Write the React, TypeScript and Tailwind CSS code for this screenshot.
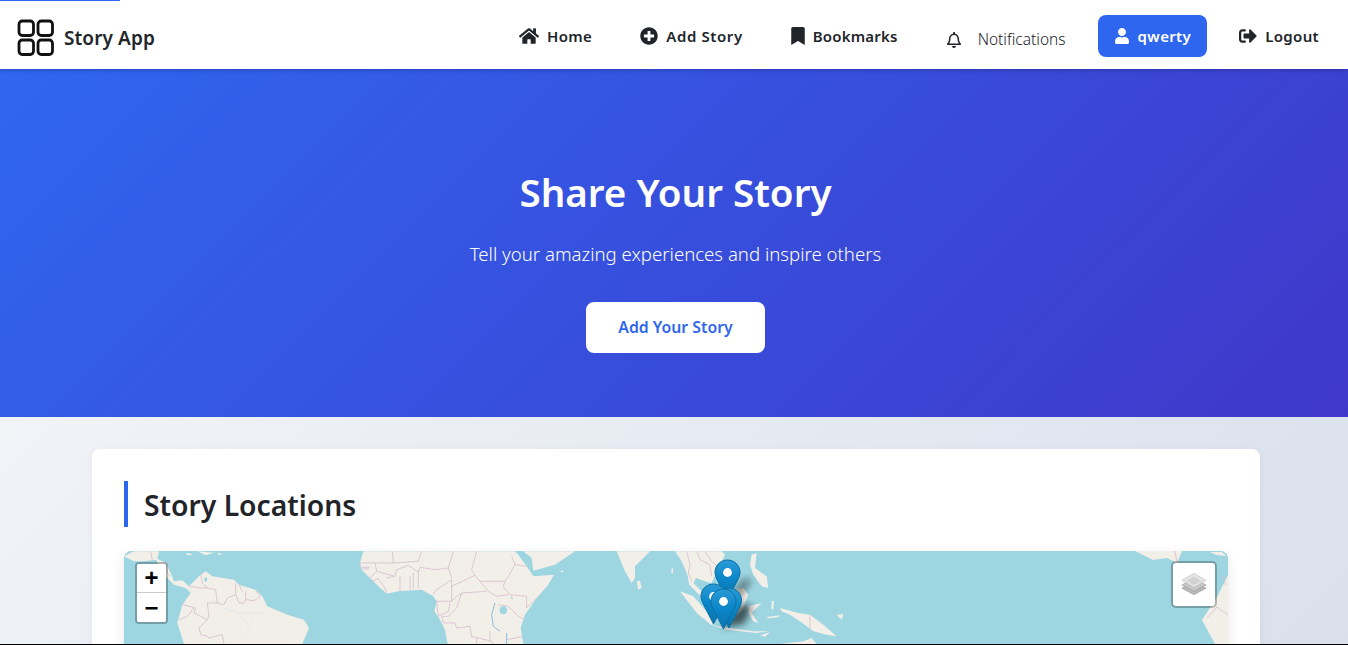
import { FaHome, FaPlusCircle, FaBookmark, FaRegBell, FaUser, FaSignOutAlt } from "react-icons/fa";
import type { ReactNode } from "react";

function NavLink({ icon, label, tracking }: { icon: ReactNode; label: string; tracking: string }) {
  return (
    <a className={`flex h-[42px] items-center gap-2 px-4 text-[15px] font-semibold text-[#212529] ${tracking}`}>
      {icon}
      <span>{label}</span>
    </a>
  );
}

function Logo() {
  return (
    <svg width="38" height="38" viewBox="0 0 38 38" fill="none" stroke="#111" strokeWidth="2.8">
      <rect x="2" y="2" width="14.5" height="14.5" rx="3.2" />
      <rect x="21" y="2" width="14.5" height="14.5" rx="3.2" />
      <rect x="2" y="21" width="14.5" height="14.5" rx="3.2" />
      <rect x="21" y="21" width="14.5" height="14.5" rx="3.2" />
    </svg>
  );
}

const PIN =
  "M0 0C-6.9 0 -12.5 5.4 -12.5 12.2C-12.5 15 -11.6 17.4 -10.2 20L0 40L10.2 20C11.6 17.4 12.5 15 12.5 12.2C12.5 5.4 6.9 0 0 0Z";

function Pin({ x, y }: { x: number; y: number }) {
  return (
    <g transform={`translate(${x} ${y})`}>
      <path d={PIN} fill="url(#pinFill)" stroke="#0b6fa3" strokeWidth="1" />
      <circle cx="0" cy="12.5" r="4.4" fill="#fff" />
    </g>
  );
}

// map art is traced in 3x crop coordinates, hence the scale on each group
function WorldMap() {
  return (
    <svg className="block h-[93px] w-[1104px]" viewBox="124 551 1104 93">
      <defs>
        <linearGradient id="pinFill" x1="0" y1="0" x2="0" y2="1">
          <stop offset="0" stopColor="#2a9bd6" />
          <stop offset="0.5" stopColor="#0a85c8" />
          <stop offset="1" stopColor="#0b74ad" />
        </linearGradient>
        <filter id="pinShadow" x="-60%" y="-60%" width="220%" height="220%">
          <feGaussianBlur stdDeviation="3.5" />
        </filter>
      </defs>
      <rect x="124" y="551" width="1104" height="93" fill="#9dd5e1" />

      {/* south america, left copy */}
      <g transform="translate(124 548) scale(0.3333)">
        <g fill="#f2efe9">
          <path d="M0 25L30 10L105 10L100 35L60 40L30 40Z" />
          <path d="M95 30L125 45L140 75L150 100L175 97L195 115L200 135L185 120L150 110L130 90L110 70Z" />
          <path d="M195 115L225 85L245 70L265 85L330 95L345 110L395 125L415 145L430 175L490 200L540 215L555 240L535 288L180 288L160 225L175 170L200 135Z" />
          <path d="M185 15L205 18L200 22L188 20ZM220 10L270 14L245 22L232 16ZM280 15L296 17L285 21Z" />
        </g>
        <path d="M242 88L250 90L248 102L241 98Z" fill="#9dd5e1" />
        <g fill="none" stroke="#d9e6e6" strokeWidth="2">
          <path d="M300 180L345 195L420 195" />
          <path d="M345 200L370 225M385 215L360 270" />
        </g>
        <g fill="none" stroke="#d5bccb" strokeWidth="2.4">
          <path d="M195 115L230 120L250 120L275 125L280 165L300 170L310 150L335 140L345 165L360 165L365 155L390 158L410 145L395 128" />
          <path d="M335 105L335 140M365 130L365 155M345 110L355 130" />
          <path d="M230 75L235 105L250 120" />
          <path d="M175 170L215 180L210 195L250 215L255 205L250 165L280 165" />
          <path d="M165 215L190 205L210 180" />
          <path d="M250 215L225 240L230 260L250 265L255 270L295 260L300 288" />
          <path d="M80 10L85 38M125 45L130 75L140 85" />
        </g>
      </g>

      {/* africa and arabia */}
      <g transform="translate(355 548) scale(0.3333)">
        <g fill="#f2efe9">
          <path d="M25 10L15 45L20 65L45 90L70 115L95 137L130 130L200 125L235 145L245 160L238 190L255 215L270 245L278 288L505 288L497 240L510 200L545 150L580 110L597 80L535 85L515 55L490 20L480 10Z" />
          <path d="M505 10L530 30L535 68L600 50L660 10Z" />
          <path d="M618 68L626 68L624 72L618 72Z" />
        </g>
        <ellipse cx="445" cy="187" rx="11" ry="12" fill="#9dd5e1" />
        <path d="M470 140L474 155L468 150Z" fill="#9dd5e1" />
        <g fill="none" stroke="#d5bccb" strokeWidth="2.4">
          <path d="M15 45L60 45L115 45L112 10" />
          <path d="M115 45L190 40L200 10" />
          <path d="M60 45L65 70L45 90" />
          <path d="M65 70L120 85L125 65L160 52L190 72L195 58L240 65L280 60L290 90" />
          <path d="M295 10L280 60" />
          <path d="M50 100L70 92L90 120L95 137" />
          <path d="M120 85L95 90" />
          <path d="M135 85L135 130M165 85L165 125M175 75L175 122M190 72L190 122" />
          <path d="M290 95L245 125L235 140" />
          <path d="M290 115L360 82L375 100L450 100" />
          <path d="M365 10L350 65L360 82" />
          <path d="M470 25L480 50L515 55" />
          <path d="M450 100L460 85L480 50" />
          <path d="M375 100L400 130L425 145L460 140" />
          <path d="M450 100L445 115L465 140L515 145L515 180L545 150" />
          <path d="M240 160L290 160L300 150L320 135L395 130" />
          <path d="M290 95L290 160" />
          <path d="M245 160L250 205L280 190L285 165" />
          <path d="M260 205L265 225L300 225L305 240L345 235L350 265L410 280L415 288" />
          <path d="M320 135L305 180L280 205L260 205" />
          <path d="M430 170L460 175L490 205L510 215" />
          <path d="M455 275L505 265M365 288L365 270M405 250L405 280" />
          <path d="M20 58L45 58M20 63L42 63" />
        </g>
        <path d="M420 165L410 200L415 235L435 250M455 255L455 288" fill="none" stroke="#7fb5d5" strokeWidth="2.6" />
      </g>

      {/* india and south east asia */}
      <g transform="translate(610 548) scale(0.3333)">
        <g fill="#f2efe9">
          <path d="M20 10L45 70L65 105L75 90L75 55L100 30L120 10Z" />
          <path d="M80 100L90 98L95 120L85 125Z" />
          <path d="M195 10L215 40L232 80L238 110L262 135L280 150L275 130L250 105L258 90L285 100L305 105L325 60L345 20L335 10Z" />
          <path d="M210 130L250 145L285 185L315 225L305 232L260 195Z" />
          <path d="M305 232L360 240L430 250L480 250L440 255L350 245Z" />
          <path d="M360 130L400 120L415 140L395 190L360 210L340 180Z" />
          <path d="M415 175L455 165L425 195L445 225L430 220L415 195Z" />
          <path d="M425 20L440 15L435 60L470 85L475 120L455 115L430 80L420 50Z" />
          <path d="M510 180L565 195L600 200L640 230L680 265L650 260L610 250L570 220L540 200L515 190Z" />
          <path d="M510 288L580 280L605 270L620 288Z" />
          <path d="M485 160L492 158L490 185L484 182ZM470 207L510 202L505 208L475 211ZM450 262L480 252L465 266Z" />
          <path d="M185 60L190 62L188 78L184 76ZM680 200L700 198L695 215Z" />
        </g>
        <g fill="none" stroke="#d5bccb" strokeWidth="2.4">
          <path d="M230 10L240 50L235 75L245 100" />
          <path d="M260 10L270 35L300 50L305 85" />
          <path d="M285 10L305 40L320 55" />
          <path d="M600 200L600 245" />
        </g>
      </g>

      {/* americas, right copy */}
      <g fill="#f2efe9">
        <path d="M1135 551L1153 560L1167 558L1177 563L1182 551Z" />
        <path d="M1228 575L1217 597L1202 620L1215 644L1228 644Z" />
        <path d="M1210 552L1222 552L1226 556L1216 555Z" />
      </g>
      <path d="M1175 551L1177 563M1228 615L1217 607L1207 618M1222 575L1226 585" fill="none" stroke="#d5bccb" strokeWidth="0.8" />

      {/* marker shadows */}
      <g fill="#10181c" filter="url(#pinShadow)">
        <path d="M730 598L743 579L752 580L738 600Z" opacity="0.5" />
        <path d="M722 628L740 604L752 606L744 624Z" opacity="0.7" />
      </g>
      <Pin x={727.5} y={560} />
      <Pin x={713.5} y={584} />
      <Pin x={729} y={588} />
      <Pin x={723.5} y={589} />
    </svg>
  );
}

function LayersIcon() {
  return (
    <svg width="26" height="25" viewBox="0 0 28 26">
      <path d="M14 10L27 17L14 24L1 17Z" fill="#b9b9b9" stroke="#9a9a9a" strokeWidth="0.7" />
      <path d="M14 6.5L27 13.5L14 20.5L1 13.5Z" fill="#c6c6c6" stroke="#9a9a9a" strokeWidth="0.7" />
      <path d="M14 1L27 8.5L14 16L1 8.5Z" fill="#e4e4e4" stroke="#c2c2c2" strokeWidth="0.7" />
      <path d="M14 4.5L22 9L14 13.5L6 9Z" fill="#d2d2d2" />
    </svg>
  );
}

export default function App() {
  return (
    <div className="relative h-[645px] overflow-hidden border-b border-black font-['Noto_Sans','Open_Sans',sans-serif]">
      <div className="absolute left-0 top-0 z-30 h-[1px] w-[120px] bg-[#2f66f0]" />

      <header className="relative z-20 flex h-[69px] items-start justify-between bg-white pl-[17px] pr-[13px] shadow-[0_1px_4px_rgba(0,0,0,0.25)]">
        <div className="mt-[19px] flex items-center gap-[9px]">
          <Logo />
          <span className="text-[19px] font-semibold tracking-[0.1px] text-[#212529]">Story App</span>
        </div>
        <nav className="mt-[15px] flex items-start gap-4">
          <NavLink icon={<FaHome className="text-[20px]" />} label="Home" tracking="tracking-[0.35px]" />
          <NavLink icon={<FaPlusCircle className="text-[18px]" />} label="Add Story" tracking="tracking-[0.6px]" />
          <NavLink icon={<FaBookmark className="h-[18px] w-[14px]" />} label="Bookmarks" tracking="tracking-[0.2px]" />
          <a className="mt-[4px] flex h-[42px] items-center gap-[16px] px-4 text-[15.5px] font-light text-[#212529]">
            <FaRegBell className="text-[16px]" />
            <span>Notifications</span>
          </a>
          <a className="flex h-[42px] items-center gap-2 rounded-lg bg-[#2f66f0] px-4 text-[15px] font-semibold tracking-[0.35px] text-white">
            <FaUser className="text-[16px]" />
            <span>qwerty</span>
          </a>
          <NavLink icon={<FaSignOutAlt className="text-[18px]" />} label="Logout" tracking="tracking-[0.35px]" />
        </nav>
      </header>

      <section className="flex h-[348px] flex-col items-center bg-[linear-gradient(135deg,#2f66f0,#3f37c9)] pl-[3px] pt-[93px] text-white">
        <h1 className="text-[38.6px] font-semibold leading-[60px]">Share Your Story</h1>
        <p className="mt-[17px] text-[18.6px] font-light leading-[30px]">Tell your amazing experiences and inspire others</p>
        <a className="mt-[33px] flex h-[51px] w-[179px] items-center justify-center rounded-lg bg-white pt-px text-[15.8px] font-semibold text-[#2f66f0]">
          Add Your Story
        </a>
      </section>

      <main className="h-[228px] bg-[linear-gradient(135deg,#f1f3f7,#d9e0ec)] pl-[92px] pr-[88px] pt-[32px]">
        <div className="rounded-lg bg-white p-8 shadow-[0_2px_8px_rgba(0,0,0,0.05)]">
          <h2 className="flex h-[46px] items-center border-l-4 border-[#2f66f0] pl-4 pt-[2px] text-[28.3px] font-semibold text-[#212529]">
            Story Locations
          </h2>
          <div className="relative mt-6 h-[400px] overflow-hidden rounded-lg bg-[#9dd5e1] shadow-[0_4px_12px_rgba(0,0,0,0.1)]">
            <WorldMap />
            <div className="absolute left-[11px] top-[11px] flex w-[33px] flex-col overflow-hidden rounded-[4px] border-2 border-[rgba(0,0,0,0.25)] bg-clip-padding">
              <div className="flex h-[29px] items-center justify-center border-b border-[#ccc] bg-white font-['Liberation_Sans',sans-serif] text-[24px] font-bold text-black">+</div>
              <div className="flex h-[29px] items-center justify-center bg-white font-['Liberation_Sans',sans-serif] text-[24px] font-bold text-black">−</div>
            </div>
            <div className="absolute right-[11px] top-[10px] flex h-[47px] w-[46px] items-center justify-center rounded-[5px] border-2 border-[rgba(0,0,0,0.25)] bg-white bg-clip-padding">
              <LayersIcon />
            </div>
          </div>
        </div>
      </main>
    </div>
  );
}
